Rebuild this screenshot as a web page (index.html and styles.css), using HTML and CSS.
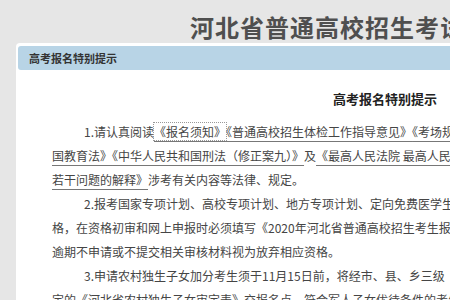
FILE: index.html
```html
<!DOCTYPE html>
<html lang="zh-CN">
<head>
<meta charset="UTF-8" />
<title>高考报名特别提示</title>
<link rel="stylesheet" href="styles.css">
</head>
<body>

  <!-- 页头 -->
  <div class="site-title">河北省普通高校招生考试信息服务平台</div>

  <!-- 提示框 -->
  <div class="dialog">
    <div class="dialog-head">高考报名特别提示</div>
    <div class="dialog-body">
      <h2>高考报名特别提示</h2>

      <p class="tip">1.请认真阅读<a class="doc focus" href="#">《报名须知》</a><a class="doc" href="#">《普通高校招生体检工作指导意见》</a><a class="doc" href="#">《考场规则》《中华人民共和</a><br><a class="doc" href="#">国教育法》</a><a class="doc" href="#">《中华人民共和国刑法（修正案九）》</a>及<a class="doc" href="#">《最高人民法院 最高人民检察院关于办理组织考试作弊等刑事案件适用法律</a><br><a class="doc" href="#">若干问题的解释》</a>涉考有关内容等法律、规定。</p>

      <p class="tip">2.报考国家专项计划、高校专项计划、地方专项计划、定向免费医学生计划的考生，须按规定进行资<br>格，在资格初审和网上申报时必须填写《2020年河北省普通高校招生考生报名登记表》相关内容，<br>逾期不申请或不提交相关审核材料视为放弃相应资格。</p>

      <p class="tip">3.申请农村独生子女加分考生须于11月15日前，将经市、县、乡三级（省直单位）审核盖章认<br>定的《河北省农村独生子女审定表》交报名点，符合军人子女优待条件的考生须于规定时间内提交。</p>
    </div>
  </div>

</body>
</html>
```

FILE: styles.css
```css
* {
  box-sizing: border-box;
}

body {
  margin: 0;
  width: 450px;
  height: 300px;
  overflow: hidden;
  background: #e6e6e6;
  font-family: "Microsoft YaHei", "Noto Sans CJK SC", sans-serif;
  color: #454545;
}

.site-title {
  height: 43px;
  padding: 13px 0 0 190px;
  font-size: 24px;
  line-height: 28px;
  font-weight: bold;
  color: #4f4f4f;
  white-space: nowrap;
  letter-spacing: 1px;
}

.dialog {
  width: 704px;
  margin-left: 16px;
  padding: 3px 2px 0;
  background: #fff;
  border-radius: 4px 4px 0 0;
}

.dialog-head {
  height: 24px;
  padding-left: 11px;
  background: #b8d4e6;
  border-radius: 3px;
  font-size: 11px;
  line-height: 24px;
  font-weight: bold;
  color: #333;
}

.dialog-body {
  padding: 0 0 0 34px;
}

.dialog-body h2 {
  margin: 19px 0 11px;
  text-align: center;
  font-size: 13px;
  line-height: 20px;
  color: #222;
}

.tip {
  margin: 0;
  font-size: 12px;
  line-height: 24px;
  text-indent: 32px;
  white-space: nowrap;
}

.doc {
  color: #454545;
  text-decoration: underline;
  text-underline-offset: 4px;
  text-decoration-color: #777;
}

.doc.focus {
  outline: 1px dotted #999;
}
```
